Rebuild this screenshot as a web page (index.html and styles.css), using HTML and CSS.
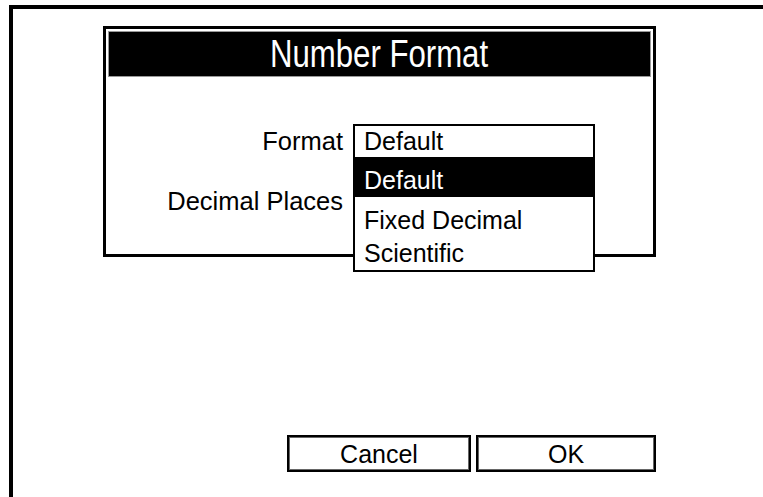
FILE: index.html
```html
<!DOCTYPE html>
<html lang="en">
<head>
    <meta charset="UTF-8">
    <meta name="viewport" content="width=device-width, initial-scale=1.0">
    <title>Number Format</title>
    <link rel="stylesheet" href="styles.css">
</head>
<body>
    <div class="screen">
        <div class="dialog">
            <div class="dialog-title"><span>Number Format</span></div>
            <div class="dialog-body">
                <div class="field-row">
                    <label class="field-label">Format</label>
                    <div class="select">
                        <div class="select-value">Default</div>
                        <ul class="select-menu">
                            <li class="selected">Default</li>
                            <li>Fixed Decimal</li>
                            <li>Scientific</li>
                        </ul>
                    </div>
                </div>
                <div class="field-row">
                    <label class="field-label">Decimal Places</label>
                    <div class="field-box"></div>
                </div>
            </div>
        </div>
        <div class="actions">
            <button type="button" class="btn btn-cancel">Cancel</button>
            <button type="button" class="btn btn-ok">OK</button>
        </div>
    </div>
</body>
</html>
```

FILE: styles.css
```css
body {
    margin: 0;
    font-family: "Liberation Sans", Arial, sans-serif;
    font-size: 25px;
    color: #000;
    background: #fff;
}
.screen {
    box-sizing: border-box;
    width: 754px;
    height: 492px;
    margin: 5px 0 0 9px;
    padding: 17px 0 0 90px;
    border-top: 4px solid #000;
    border-left: 4px solid #000;
}
.dialog {
    box-sizing: border-box;
    width: 553px;
    height: 231px;
    padding: 2px;
    border: 3px solid #000;
}
.dialog-title {
    height: 44px;
    line-height: 44px;
    border: 1px solid #999;
    background: #000;
    color: #fff;
    text-align: center;
    font-size: 38px;
}
.dialog-title span {
    display: inline-block;
    transform: scaleX(0.82);
}
.dialog-body {
    padding-top: 47px;
}
.field-row {
    display: flex;
    align-items: flex-start;
    gap: 10px;
    margin-bottom: 26px;
}
.field-label {
    width: 235px;
    padding-top: 1px;
    line-height: 33px;
    text-align: right;
    font-size: 25.5px;
}
.select {
    position: relative;
    width: 242px;
    box-sizing: border-box;
    border: 2px solid #000;
    border-bottom: 0;
}
.select-value {
    line-height: 31px;
    padding-left: 9px;
}
.field-box {
    box-sizing: border-box;
    width: 242px;
    height: 33px;
    border: 2px solid #000;
}
.select-menu {
    position: absolute;
    top: 100%;
    left: -2px;
    right: -2px;
    z-index: 2;
    margin: 0;
    padding: 0;
    list-style: none;
    background: #fff;
    border: 2px solid #000;
    border-top: 0;
}
.select-menu li {
    line-height: 33px;
    padding-left: 9px;
}
.select-menu li.selected {
    padding-top: 7px;
    margin-bottom: 7px;
    background: #000;
    color: #fff;
}
.actions {
    display: flex;
    justify-content: flex-end;
    gap: 5px;
    width: 553px;
    margin-top: 178px;
}
.btn {
    box-sizing: border-box;
    height: 37px;
    padding: 1px 0 0;
    border: 2px solid #000;
    box-shadow: inset 0 0 0 1px #666;
    background: #fff;
    font-family: "Liberation Sans", Arial, sans-serif;
    font-size: 25px;
    line-height: 30px;
    color: #000;
}
.btn-cancel {
    width: 184px;
}
.btn-ok {
    width: 180px;
}
```
